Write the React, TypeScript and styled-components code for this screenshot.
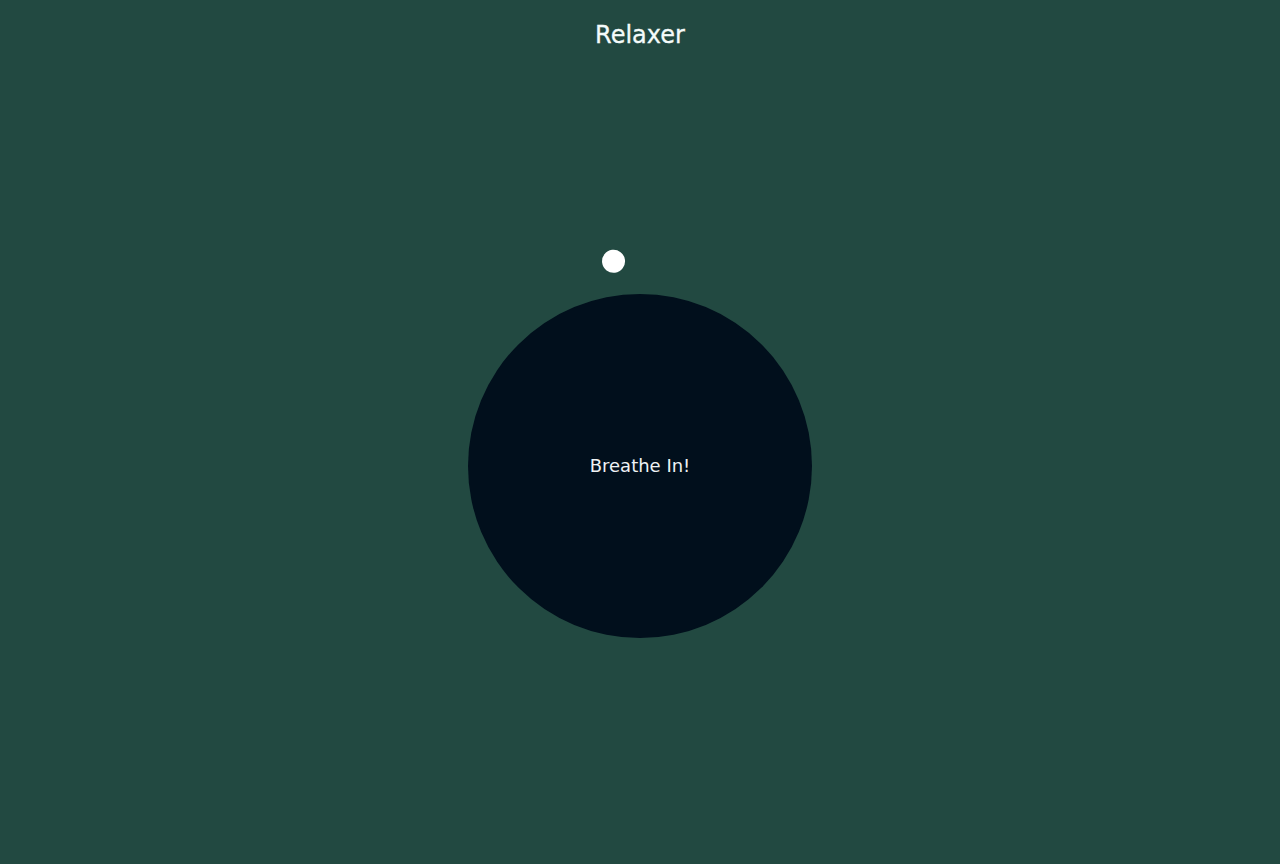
import React from "react";
import styled, { createGlobalStyle } from "styled-components";

const GlobalStyle = createGlobalStyle`
  html, body {
    margin: 0;
    padding: 0;
    background: #224941;
    color: #ffffff;
    font-family: "DejaVu Sans", "Noto Sans", sans-serif;
    overflow: hidden;
  }
  #root {
    min-height: 100vh;
  }
`;

const Page = styled.div`
  min-height: 100vh;
  display: flex;
  flex-direction: column;
  align-items: center;
`;

const Title = styled.h1`
  margin: 21px 0 0;
  font-size: 24px;
  font-weight: normal;
  line-height: 28px;
  color: #f4fbfa;
  -webkit-text-stroke: 0.3px #f4fbfa;
`;

const Stage = styled.div`
  position: relative;
  width: 344px;
  height: 344px;
  margin-top: 245px;
`;

const Circle = styled.div`
  width: 100%;
  height: 100%;
  border-radius: 50%;
  background: #010f1c;
  display: flex;
  align-items: center;
  justify-content: center;
`;

const Label = styled.p`
  margin: 0;
  font-size: 18px;
  line-height: 22px;
  color: #eef2f4;
`;

const PointerArm = styled.div<{ $angle: number }>`
  position: absolute;
  left: calc(50% - 11.5px);
  bottom: 50%;
  width: 23px;
  height: 218px;
  transform-origin: bottom center;
  transform: rotate(${(p) => p.$angle}deg);
`;

const Dot = styled.span`
  display: block;
  width: 23px;
  height: 23px;
  border-radius: 50%;
  background: #ffffff;
`;

export default function App() {
  return (
    <>
      <GlobalStyle />
      <Page>
        <Title>Relaxer</Title>
        <Stage>
          <Circle>
            <Label>Breathe In!</Label>
          </Circle>
          <PointerArm $angle={-7.5}>
            <Dot />
          </PointerArm>
        </Stage>
      </Page>
    </>
  );
}
